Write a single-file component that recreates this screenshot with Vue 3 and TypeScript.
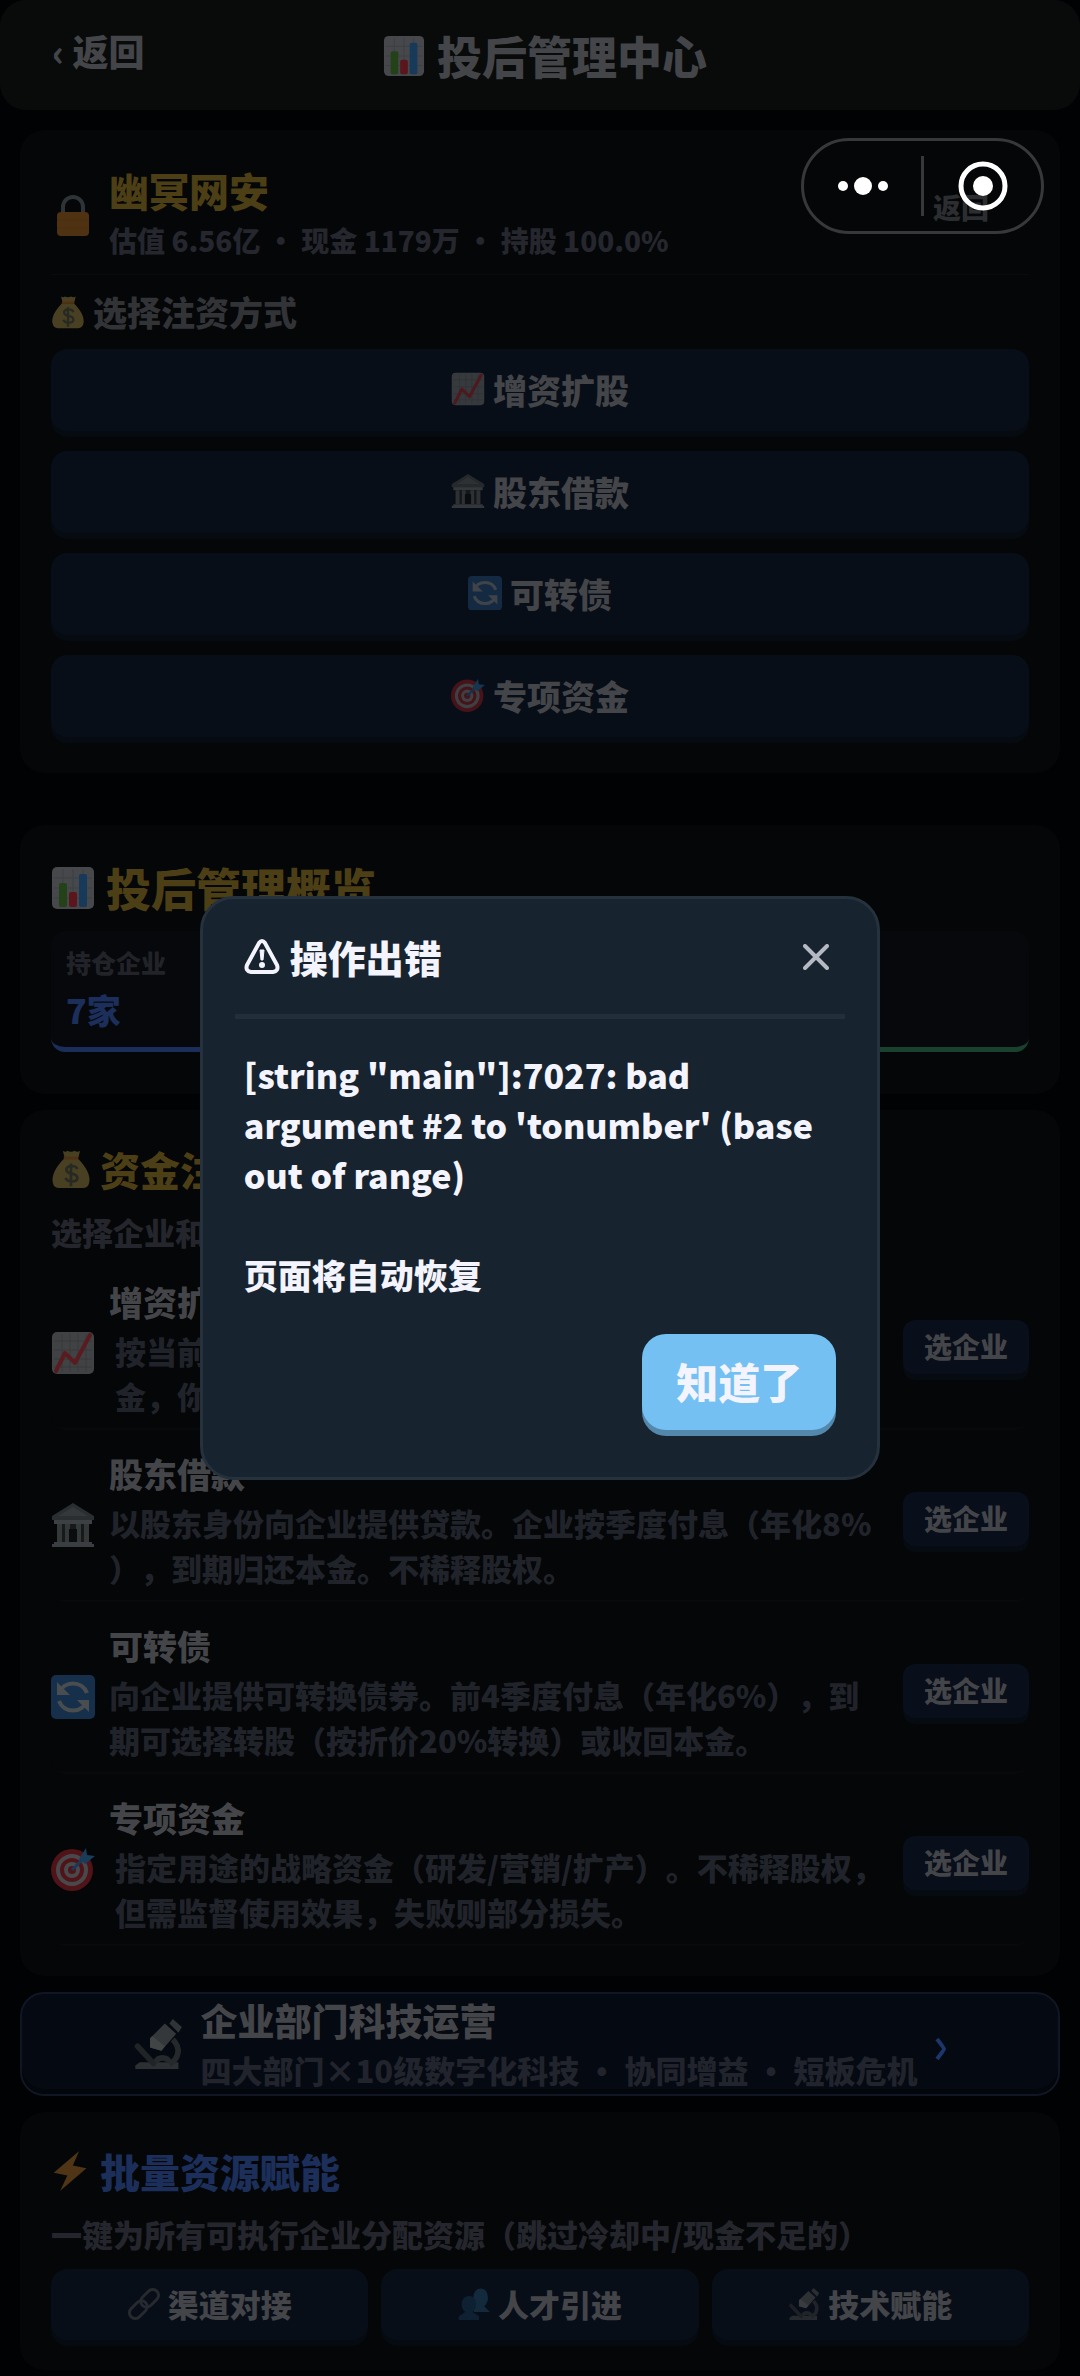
<script setup lang="ts">
import { ref } from 'vue'

const glyphs: Record<string, string> = {
  bars: '<rect x="1" y="1" width="42" height="42" rx="5" fill="#46484b"/><path d="M12 3v38M22 3v38M32 3v38M3 12h38M3 22h38M3 32h38" stroke="#3d4043" stroke-width="1"/><rect x="8" y="17" width="8" height="24" rx="2" fill="#234218"/><rect x="18" y="26" width="8" height="15" rx="2" fill="#5a161c"/><rect x="28" y="8" width="8" height="33" rx="2" fill="#17395a"/>',
  lock: '<path d="M12 22V14a10 10 0 0 1 20 0v8" fill="none" stroke="#2d3336" stroke-width="4"/><rect x="6" y="19" width="32" height="24" rx="4" fill="#4f3212"/><path d="M6 27h32M6 35h32" stroke="#49300f" stroke-width="1"/>',
  bag: '<path d="M13 2q3 2 5 0q4 2 8 0q3 2 6 0l-2 8H15z" fill="#494023"/><path d="M14 11C6 19 0 29 2 37c1 4 3 6 7 6h26c4 0 6-2 7-6 2-8-4-18-12-26z" fill="#494023"/><path d="M14 10h16" stroke="#4f3212" stroke-width="3"/><path d="M29 22c-2-5-13-4-12 1 1 6 12 2 12 9 0 5-11 5-13 0M22 16v25" fill="none" stroke="#272923" stroke-width="3"/>',
  rise: '<rect x="1" y="1" width="42" height="42" rx="5" fill="#404244"/><path d="M11 3v38M19 3v38M27 3v38M35 3v38M3 10h38M3 19h38M3 28h38M3 36h38" stroke="#36393b" stroke-width="1"/><path d="M5 40L14 22L24 32L39 4" fill="none" stroke="#5a1b20" stroke-width="4" stroke-linecap="round" stroke-linejoin="round"/>',
  bank: '<path d="M22 0L43 13v4H1v-4z" fill="#2b2e30"/><path d="M22 4l15 9H7z" fill="#35383a"/><path d="M3 17h38v4H3z" fill="#3d4042"/><path d="M6 21h32v18H6z" fill="#17191b"/><path d="M6 21h5v18H6zM14 21h5v18h-5zM25 21h5v18h-5zM33 21h5v18h-5z" fill="#353839"/><path d="M18 26h8v13h-8z" fill="#0b0c0e"/><path d="M3 39h38v2H3zM1 41h42v3H1z" fill="#3b3e40"/>',
  cycle: '<rect x="0" y="0" width="44" height="44" rx="5" fill="#162f4a"/><path d="M8 18a15 15 0 0 1 28 0M36 26a15 15 0 0 1-28 0" fill="none" stroke="#4a4d50" stroke-width="4"/><path d="M6 7v13h13zM38 37V25H26z" fill="#4a4d50"/>',
  target: '<circle cx="21" cy="23" r="21" fill="#501418"/><circle cx="21" cy="23" r="16" fill="#48494c"/><circle cx="21" cy="23" r="12" fill="#501418"/><circle cx="21" cy="23" r="8" fill="#48494c"/><circle cx="21" cy="23" r="4" fill="#501418"/><path d="M21 23L35 9" stroke="#17395a" stroke-width="3"/><path d="M28 12l7-11 1 7 8 1-10 8z" fill="#193c59"/>',
  scope: '<path d="M6 38h34v6H2v-3z" fill="#2c3033"/><path d="M35 18c8 8 5 17-3 22M20 38c2-5 10-5 12 0" fill="none" stroke="#25292c" stroke-width="5"/><path d="M4 24l14 15" stroke="#202427" stroke-width="5" stroke-linecap="round"/><path d="M15 17L28 4l10 9L25 28l-10-3z" fill="#34383a"/><path d="M15 17l2-2 11 9-3 4-10-3z" fill="#424546"/><path d="M32 4l3-4 8 7-3 5z" fill="#303436"/>',
  bolt: '<path d="M31 0L3 24l15 3L10 44 39 19 24 16z" fill="#4f3515"/>',
  link: '<g fill="none" stroke="#2b2f33" stroke-width="4" transform="rotate(-45 22 22)"><rect x="-3" y="14" width="28" height="16" rx="8"/><rect x="19" y="14" width="28" height="16" rx="8"/></g>',
  people: '<path d="M21 14c0-18 22-18 20 2-1 5-3 7-5 9l8 8H22z" fill="#153044"/><path d="M5 22c0-15 22-15 20 2-1 5-3 7-5 9l9 6v5H1v-5l9-6c-3-3-5-5-5-11z" fill="#102538"/>',
}

interface Method { icon: string; name: string; lines: string[]; inset: boolean }
const methods: Method[] = [
  { icon: 'rise', name: '增资扩股', lines: ['按当前估值向企业增资扩股。企业获得资', '金，你的持股比例相应提升。'], inset: true },
  { icon: 'bank', name: '股东借款', lines: ['以股东身份向企业提供贷款。企业按季度付息（年化8%', '），到期归还本金。不稀释股权。'], inset: false },
  { icon: 'cycle', name: '可转债', lines: ['向企业提供可转换债券。前4季度付息（年化6%），到', '期可选择转股（按折价20%转换）或收回本金。'], inset: false },
  { icon: 'target', name: '专项资金', lines: ['指定用途的战略资金（研发/营销/扩产）。不稀释股权，', '但需监督使用效果，失败则部分损失。'], inset: true },
]
const batch = [
  { icon: 'link', name: '渠道对接' },
  { icon: 'people', name: '人才引进' },
  { icon: 'scope', name: '技术赋能' },
]
const open = ref(true)
</script>

<template>
  <div class="page">
    <header class="top">
      <button class="back" type="button">‹ 返回</button>
      <h1><svg class="ico i42" viewBox="0 0 44 44" v-html="glyphs.bars" />投后管理中心</h1>
      <span></span>
    </header>

    <main class="stack">
      <section class="card company">
        <div class="head">
          <svg class="ico i44" viewBox="0 0 44 44" v-html="glyphs.lock" />
          <div class="grow">
            <h2 class="gold name">幽冥网安</h2>
            <p class="meta">估值 6.56亿 • 现金 1179万 • 持股 100.0%</p>
          </div>
          <button class="ghost" type="button">返回</button>
        </div>
        <h3 class="pick"><svg class="ico i34" viewBox="0 0 44 44" v-html="glyphs.bag" />选择注资方式</h3>
        <div class="choices">
          <button v-for="m in methods" :key="m.name" class="btn wide" type="button">
            <svg class="ico i34" viewBox="0 0 44 44" v-html="glyphs[m.icon]" />{{ m.name }}
          </button>
        </div>
      </section>

      <section class="card overview">
        <h2 class="gold big"><svg class="ico i44" viewBox="0 0 44 44" v-html="glyphs.bars" />投后管理概览</h2>
        <div class="stats">
          <div class="stat blue"><span>持仓企业</span><b>7家</b></div>
          <div class="stat green"></div>
        </div>
      </section>

      <section class="card fund">
        <h2 class="gold title"><svg class="ico i40" viewBox="0 0 44 44" v-html="glyphs.bag" />资金注入</h2>
        <p class="sub">选择企业和注资方式</p>
        <ul class="list">
          <li v-for="m in methods" :key="m.name" class="row">
            <svg class="ico i44" viewBox="0 0 44 44" v-html="glyphs[m.icon]" />
            <div class="grow">
              <h3>{{ m.name }}</h3>
              <p class="desc" :class="{ inset: m.inset }"><span v-for="l in m.lines" :key="l">{{ l }}</span></p>
            </div>
            <button class="btn small" type="button">选企业</button>
          </li>
        </ul>
      </section>

      <button class="tech" type="button">
        <svg class="ico i50" viewBox="0 0 44 44" v-html="glyphs.scope" />
        <span class="techtext">
          <strong>企业部门科技运营</strong>
          <span>四大部门×10级数字化科技 • 协同增益 • 短板危机</span>
        </span>
        <svg class="chev" viewBox="0 0 12 22"><path d="M2 1q7 9 7 10t-7 10" fill="none" stroke="#1c356b" stroke-width="4" /></svg>
      </button>

      <section class="card power">
        <h2 class="azure title"><svg class="ico i40" viewBox="0 0 44 44" v-html="glyphs.bolt" />批量资源赋能</h2>
        <p class="sub">一键为所有可执行企业分配资源（跳过冷却中/现金不足的）</p>
        <div class="trio">
          <button v-for="b in batch" :key="b.name" class="btn third" type="button">
            <svg class="ico i32" viewBox="0 0 44 44" v-html="glyphs[b.icon]" />{{ b.name }}
          </button>
        </div>
      </section>
    </main>

    <div class="capsule">
      <button type="button" aria-label="更多">
        <svg class="dots" viewBox="0 0 50 18"><circle cx="5" cy="9" r="5" /><circle cx="25" cy="9" r="9" /><circle cx="45" cy="9" r="5" /></svg>
      </button>
      <i></i>
      <button type="button" aria-label="关闭小程序">
        <svg class="ring" viewBox="0 0 50 50"><circle cx="25" cy="25" r="22" fill="none" stroke="#fff" stroke-width="5" /><circle cx="25" cy="25" r="10" /></svg>
      </button>
    </div>

    <div v-if="open" class="veil">
      <div class="modal" role="alertdialog" aria-labelledby="err-title">
        <div class="mhead">
          <h2 id="err-title">
            <svg class="warn" viewBox="0 0 36 36"><path d="M15 4q3-4 6 0l12 22q2 6-4 7H7q-6-1-4-7z" fill="none" stroke="#f3f4fd" stroke-width="4" /><path d="M16 11h4l-1 10h-2z" fill="#f3f4fd" stroke="#f3f4fd" /><circle cx="18" cy="26" r="3" fill="#f3f4fd" /></svg>操作出错
          </h2>
          <button class="x" type="button" aria-label="关闭" @click="open = false">
            <svg viewBox="0 0 26 26"><path d="M2 2l22 22M24 2L2 24" stroke="#b4b9c3" stroke-width="4" stroke-linecap="round" /></svg>
          </button>
        </div>
        <div class="mbody">
          <p>[string "main"]:7027: bad argument #2 to 'tonumber' (base out of range)</p>
          <p>页面将自动恢复</p>
        </div>
        <div class="mfoot"><button class="ok" type="button" @click="open = false">知道了</button></div>
      </div>
    </div>
  </div>
</template>

<style>
body {
  margin: 0;
  background: #010204;
}
</style>

<style scoped>
.page {
  font-family: "Noto Sans CJK SC", "Noto Sans", sans-serif;
  font-weight: 900;
  text-spacing-trim: space-all;
  color: #444549;
  background: #010204;
}
h1, h2, h3, p, ul {
  margin: 0;
  padding: 0;
  font-weight: 900;
}
button {
  border: 0;
  padding: 0;
  background: none;
  color: inherit;
  font: inherit;
  text-spacing-trim: inherit;
  cursor: pointer;
}
.ico {
  flex: none;
}
.i32 { width: 32px; height: 32px; }
.i34 { width: 34px; height: 34px; }
.i40 { width: 40px; height: 40px; }
.i42 { width: 42px; height: 42px; }
.i44 { width: 44px; height: 44px; }
.i50 { width: 50px; height: 50px; }
.grow {
  flex: 1;
  min-width: 0;
}
.top {
  display: grid;
  grid-template-columns: 1fr auto 1fr;
  align-items: start;
  padding: 26px 42px 24px 52px;
  border-radius: 26px;
  background: #090b0b;
}
.back {
  justify-self: start;
  font-size: 36px;
  line-height: 48px;
}
.top h1 {
  display: flex;
  align-items: center;
  gap: 12px;
  font-size: 45px;
  line-height: 60px;
}
.stack {
  display: flex;
  flex-direction: column;
  gap: 16px;
  padding: 20px 20px 6px;
}
.card {
  padding: 31px 31px 30px;
  border-radius: 24px;
  background: #040607;
}
.card.company {
  margin-bottom: 36px;
  padding: 35px 31px 36px;
}
.head {
  display: flex;
  align-items: center;
  gap: 14px;
  padding-bottom: 16px;
  border-bottom: 1px solid #090b0d;
}
.head .ico {
  margin-top: 6px;
}
.gold {
  color: #4d3f15;
}
.azure {
  color: #1c2f5a;
}
.name {
  font-size: 40px;
  line-height: 50px;
}
.meta {
  margin-top: 7px;
  font-size: 28px;
  line-height: 36px;
  color: #25262e;
}
.ghost {
  margin: 0 40px 10px 0;
  font-size: 28px;
  color: #2c2d30;
}
.pick {
  display: flex;
  align-items: center;
  gap: 8px;
  margin: 15px 0;
  font-size: 34px;
  line-height: 44px;
  color: #323337;
}
.choices {
  display: flex;
  flex-direction: column;
  gap: 20px;
}
.btn {
  display: flex;
  align-items: center;
  justify-content: center;
  gap: 8px;
  padding-bottom: 2px;
  border-radius: 16px;
  background: #080e18;
  box-shadow: 0 6px 0 #060a11;
}
.btn .ico {
  opacity: 0.85;
}
.wide {
  height: 82px;
  font-size: 34px;
}
.card.overview {
  padding: 33px 31px 42px;
}
.big, .title {
  display: flex;
  align-items: center;
  gap: 11px;
}
.big {
  font-size: 45px;
  line-height: 60px;
}
.title {
  gap: 9px;
  font-size: 40px;
  line-height: 56px;
}
.stats {
  display: grid;
  grid-template-columns: 1fr 1fr;
  gap: 12px;
  margin-top: 13px;
}
.stat {
  display: flex;
  flex-direction: column;
  gap: 7px;
  padding: 14px 15px 13px;
  border-radius: 14px;
  background: #06080c;
}
.blue {
  border-bottom: 5px solid #1b2d59;
}
.green {
  border-bottom: 5px solid #19412d;
}
.stat span {
  font-size: 25px;
  line-height: 34px;
  color: #222329;
}
.stat b {
  font-size: 34px;
  line-height: 48px;
  color: #1c2f5a;
}
.sub {
  margin-top: 13px;
  font-size: 31px;
  line-height: 44px;
  color: #25262d;
}
.list {
  margin-top: 4px;
  list-style: none;
}
.row {
  display: flex;
  align-items: center;
  gap: 14px;
  padding: 20px 0 10px;
  border-bottom: 2px solid #07090b;
  border-radius: 14px;
}
.row .ico {
  margin-top: 10px;
}
.row h3 {
  font-size: 34px;
  line-height: 48px;
}
.desc {
  margin-top: 2px;
  font-size: 31px;
  line-height: 45px;
  color: #21232b;
  white-space: nowrap;
}
.desc span {
  display: block;
}
.inset {
  padding-left: 6px;
}
.small {
  width: 126px;
  height: 54px;
  margin-bottom: 2px;
  border-radius: 12px;
  font-size: 28px;
  background: #080e1a;
}
.tech {
  display: flex;
  align-items: center;
  justify-content: center;
  gap: 17px;
  padding: 1px 0 2px;
  border: 2px solid #101624;
  border-radius: 24px;
  background: #050911;
  box-shadow: inset 0 -5px 0 #03060b;
  text-align: left;
}
.techtext {
  display: flex;
  flex-direction: column;
  gap: 3px;
}
.techtext strong {
  font-size: 37px;
  line-height: 50px;
}
.techtext span {
  font-size: 31px;
  line-height: 44px;
  color: #21242c;
}
.chev {
  width: 12px;
  height: 22px;
  margin-top: 10px;
}
.trio {
  display: grid;
  grid-template-columns: repeat(3, 1fr);
  gap: 13px;
  margin-top: 13px;
}
.third {
  height: 71px;
  font-size: 31px;
}
.capsule {
  position: absolute;
  top: 138px;
  right: 36px;
  z-index: 3;
  box-sizing: border-box;
  display: flex;
  align-items: center;
  width: 243px;
  height: 96px;
  border: 3px solid #37383a;
  border-radius: 48px;
}
.capsule button {
  flex: 1;
  display: flex;
  justify-content: center;
}
.capsule svg {
  fill: #fff;
}
.capsule i {
  width: 3px;
  height: 60px;
  background: #37383a;
}
.dots {
  width: 50px;
  height: 18px;
}
.ring {
  width: 50px;
  height: 50px;
}
.veil {
  position: fixed;
  inset: 0;
  z-index: 2;
  display: flex;
  align-items: center;
  justify-content: center;
}
.modal {
  box-sizing: border-box;
  width: 63%;
  padding: 30px 32px 47px;
  border: 3px solid #25323e;
  border-radius: 34px;
  background: #17232e;
  color: #f3f4fd;
}
.mhead {
  display: flex;
  align-items: center;
  justify-content: space-between;
  padding: 0 16px 29px 9px;
  border-bottom: 5px solid #222e3a;
}
.mhead h2 {
  display: flex;
  align-items: center;
  gap: 10px;
  font-size: 38px;
  line-height: 56px;
}
.warn {
  width: 36px;
  height: 36px;
}
.x {
  display: flex;
}
.x svg {
  width: 26px;
  height: 26px;
}
.mbody {
  display: flex;
  flex-direction: column;
  gap: 50px;
  padding: 31px 9px 34px;
  font-size: 34px;
  line-height: 50px;
}
.mfoot {
  display: flex;
  justify-content: flex-end;
  padding: 0 9px;
}
.ok {
  width: 194px;
  height: 96px;
  padding-bottom: 3px;
  border-radius: 24px;
  background: #74c0f2;
  box-shadow: 0 6px 0 #5387ab;
  font-size: 42px;
}
</style>
